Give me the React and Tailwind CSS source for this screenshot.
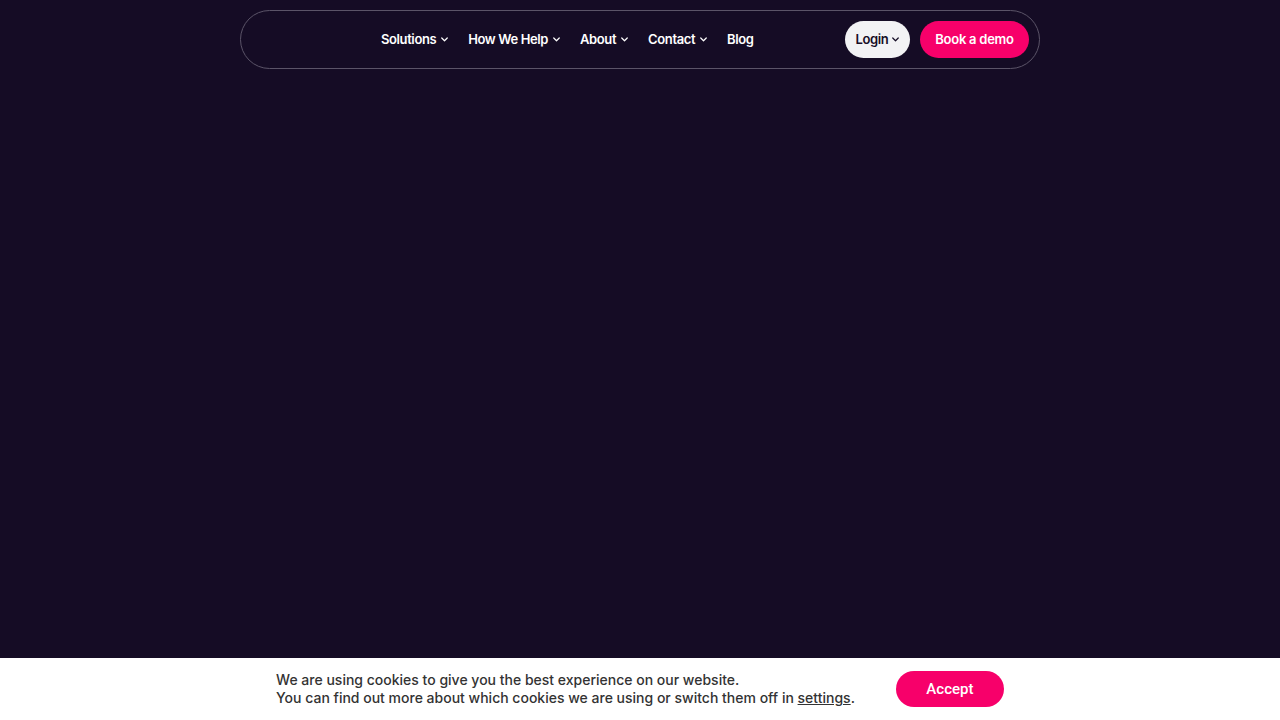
import React from 'react';

const Chevron = ({ className = '' }) => (
    <svg width="7" height="5" viewBox="0 0 7 5" fill="none" className={className}>
        <path d="M0.75 1l2.75 2.75L6.25 1" stroke="currentColor" strokeWidth="1.2" strokeLinecap="round" strokeLinejoin="round" />
    </svg>
);

const navLinks = [
    { label: 'Solutions', menu: true },
    { label: 'How We Help', menu: true },
    { label: 'About', menu: true },
    { label: 'Contact', menu: true },
    { label: 'Blog', menu: false },
];

const App = () => {
    return (
        <div className="h-screen flex flex-col bg-[#150c25] font-['Inter',sans-serif]">
            {/* Header */}
            <header className="pt-[10px]">
                <nav className="w-[800px] h-[59px] mx-auto flex items-center rounded-full border border-[#5b5468] pl-[140px] pr-[10px]">
                    <ul className="flex items-center gap-[20px]">
                        {navLinks.map((link) => (
                            <li key={link.label}>
                                <a href="#" className="flex items-center gap-[5px] text-[13px] font-semibold tracking-[-0.03em] text-white">
                                    {link.label}
                                    {link.menu && <Chevron />}
                                </a>
                            </li>
                        ))}
                    </ul>
                    <div className="ml-auto flex items-center gap-[10px]">
                        <button className="h-[37px] w-[65px] flex items-center justify-center gap-[4px] rounded-full bg-[#f2f2f4] text-[13px] font-semibold tracking-[-0.03em] text-[#150c25]">
                            Login
                            <Chevron />
                        </button>
                        <button className="h-[37px] w-[109px] rounded-full bg-[#f7006a] text-[13px] font-semibold tracking-[-0.02em] text-white">
                            Book a demo
                        </button>
                    </div>
                </nav>
            </header>

            <main className="flex-1" />

            {/* Cookie banner */}
            <div className="h-[62px] bg-white flex items-center justify-center gap-[41px]">
                <p className="text-[14px] leading-[18px] font-medium text-[#333333] font-['Inter',sans-serif]">
                    We are using cookies to give you the best experience on our website.
                    <br />
                    You can find out more about which cookies we are using or switch them off in{' '}
                    <a href="#" className="underline">settings</a>.
                </p>
                <button className="h-[36px] w-[108px] rounded-full bg-[#f7006a] text-white text-[15px] font-medium font-['Roboto',sans-serif]">
                    Accept
                </button>
            </div>
        </div>
    );
};

export default App;
